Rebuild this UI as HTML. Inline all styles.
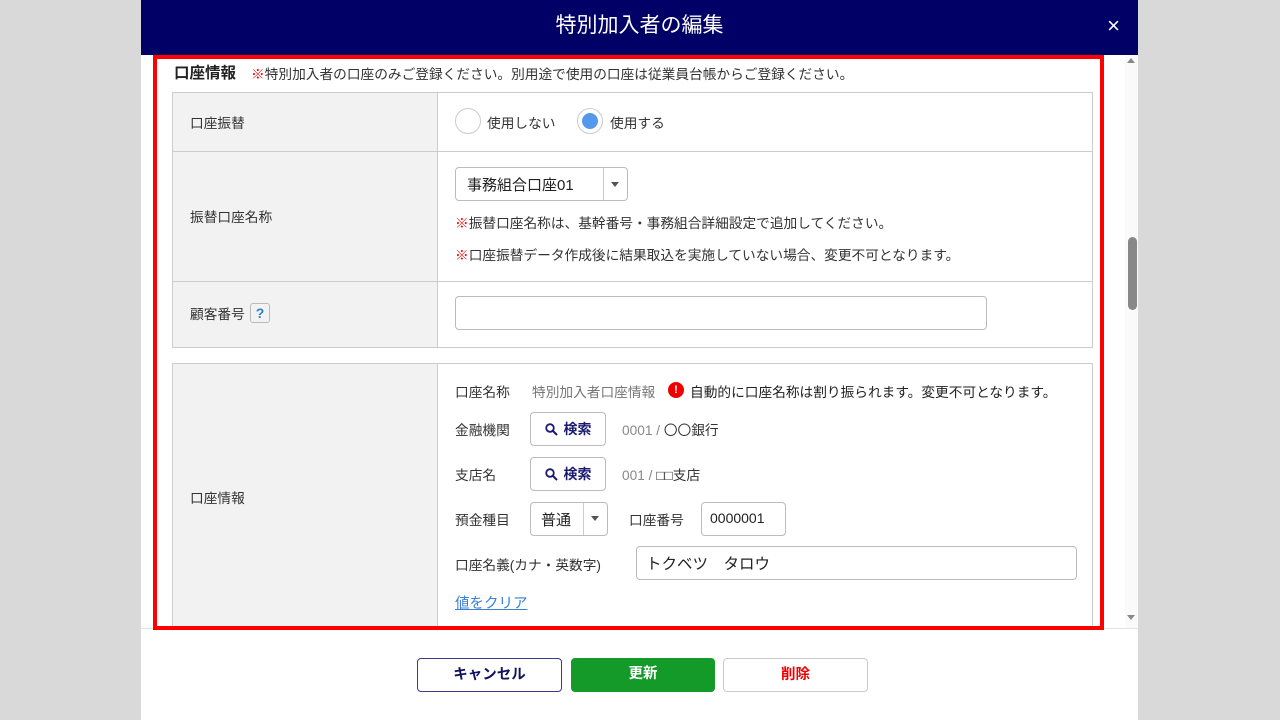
<!DOCTYPE html>
<html><head><meta charset="utf-8"><style>
*{box-sizing:border-box;margin:0;padding:0}
body{width:1280px;height:720px;background:#d9d9d9;position:relative;overflow:hidden;font-family:"Liberation Sans","Noto Sans CJK JP",sans-serif;color:#333;font-size:13.7px}
.a{position:absolute}
.modal{left:141px;top:0;width:997px;height:720px;background:#fff}
.hd{left:141px;top:0;width:997px;height:55px;background:#000066;color:#fff;font-size:21px;text-align:center;line-height:52px}
.lab{background:#f2f2f2;border-right:1px solid #ccc}
.b{border:1px solid #ccc}
.box{border:1px solid #bbb;border-radius:4px;background:#fff}
.red{color:#e00}
.t{white-space:nowrap}
.btn{border-radius:4px;text-align:center;line-height:32px;font-weight:bold;font-size:14.5px}
.srch{border:1px solid #bbb;border-radius:4px;font-weight:bold;line-height:32px;text-align:center;width:76px;height:34px;color:#1a1a70;font-size:14px}
.srch svg{vertical-align:-2px;margin-right:6px}
</style></head><body>
<div class="a modal"></div>
<div class="a hd">特別加入者の編集<span style="position:absolute;right:18px;top:0;font-size:22px">×</span></div>
<div class="a" style="left:1125px;top:55px;width:13px;height:573px;background:#fafafa"></div>
<div class="a" style="left:1127px;top:58px;border:4px solid transparent;border-bottom:5px solid #888;border-top:0"></div>
<div class="a" style="left:1127px;top:615px;border:4px solid transparent;border-top:5px solid #888;border-bottom:0"></div>
<div class="a" style="left:1128px;top:237px;width:9px;height:73px;background:#888;border-radius:5px"></div>
<div class="a" style="left:141px;top:628px;width:997px;height:1px;background:#e4e4e4"></div>

<div class="a t" style="left:174px;top:61px;font-size:15.5px;font-weight:bold;color:#222">口座情報</div>
<div class="a t" style="left:251px;top:63px"><span class="red">※</span>特別加入者の口座のみご登録ください。別用途で使用の口座は従業員台帳からご登録ください。</div>

<div class="a b" style="left:172px;top:92px;width:921px;height:256px"></div>
<div class="a lab" style="left:173px;top:93px;width:265px;height:254px"></div>
<div class="a" style="left:173px;top:151px;width:919px;height:1px;background:#ccc"></div>
<div class="a" style="left:173px;top:281px;width:919px;height:1px;background:#ccc"></div>
<div class="a t" style="left:190px;top:112px">口座振替</div>
<div class="a t" style="left:190px;top:206px">振替口座名称</div>
<div class="a t" style="left:190px;top:303px">顧客番号</div>
<div class="a" style="left:250px;top:303px;width:20px;height:20px;border:1px solid #bbb;border-radius:3px;color:#2a7fd4;font-weight:bold;text-align:center;line-height:18px;font-size:14px">?</div>

<div class="a" style="left:455px;top:108px;width:26px;height:26px;border:1px solid #ccc;border-radius:50%"></div>
<div class="a t" style="left:487px;top:112px">使用しない</div>
<div class="a" style="left:577px;top:108px;width:26px;height:26px;border:1px solid #ccc;border-radius:50%"></div>
<div class="a" style="left:582px;top:113px;width:16px;height:16px;background:#5599ee;border-radius:50%"></div>
<div class="a t" style="left:610px;top:112px">使用する</div>

<div class="a box" style="left:455px;top:167px;width:173px;height:34px"></div>
<div class="a" style="left:603px;top:168px;width:1px;height:32px;background:#ccc"></div>
<div class="a t" style="left:467px;top:174px;font-size:15px;color:#222">事務組合口座01</div>
<div class="a" style="left:611px;top:182px;border:4px solid transparent;border-top:5px solid #555;border-bottom:0"></div>
<div class="a t" style="left:455px;top:212px"><span class="red">※</span>振替口座名称は、基幹番号・事務組合詳細設定で追加してください。</div>
<div class="a t" style="left:455px;top:244px"><span class="red">※</span>口座振替データ作成後に結果取込を実施していない場合、変更不可となります。</div>
<div class="a box" style="left:455px;top:296px;width:532px;height:34px"></div>

<div class="a b" style="left:172px;top:363px;width:921px;height:270px"></div>
<div class="a lab" style="left:173px;top:364px;width:265px;height:268px"></div>
<div class="a t" style="left:190px;top:487px">口座情報</div>
<div class="a t" style="left:455px;top:381px">口座名称</div>
<div class="a t" style="left:532px;top:381px;color:#777">特別加入者口座情報</div>
<div class="a" style="left:668px;top:382px;width:16px;height:16px;border-radius:50%;background:#e00;color:#fff;font-weight:bold;font-size:11px;text-align:center;line-height:16px">!</div>
<div class="a t" style="left:690px;top:381px;color:#222">自動的に口座名称は割り振られます。変更不可となります。</div>
<div class="a t" style="left:455px;top:419px">金融機関</div>
<div class="a srch" style="left:530px;top:412px"><svg width="13" height="13" viewBox="0 0 13 13"><circle cx="5" cy="5" r="3.8" fill="none" stroke="#1a1a70" stroke-width="1.8"/><path d="M8 8l4 4" stroke="#1a1a70" stroke-width="2"/></svg>検索</div>
<div class="a t" style="left:622px;top:419px"><span style="color:#888">0001 / </span>〇〇銀行</div>
<div class="a t" style="left:455px;top:464px">支店名</div>
<div class="a srch" style="left:530px;top:457px"><svg width="13" height="13" viewBox="0 0 13 13"><circle cx="5" cy="5" r="3.8" fill="none" stroke="#1a1a70" stroke-width="1.8"/><path d="M8 8l4 4" stroke="#1a1a70" stroke-width="2"/></svg>検索</div>
<div class="a t" style="left:622px;top:464px"><span style="color:#888">001 / </span>□□支店</div>
<div class="a t" style="left:455px;top:509px">預金種目</div>
<div class="a box" style="left:530px;top:502px;width:78px;height:34px"></div>
<div class="a" style="left:583px;top:503px;width:1px;height:32px;background:#ccc"></div>
<div class="a t" style="left:541px;top:509px;font-size:15px;color:#222">普通</div>
<div class="a" style="left:591px;top:516px;border:4px solid transparent;border-top:5px solid #555;border-bottom:0"></div>
<div class="a t" style="left:629px;top:509px">口座番号</div>
<div class="a box" style="left:701px;top:502px;width:85px;height:34px"></div>
<div class="a t" style="left:710px;top:510px;font-size:14px;color:#222">0000001</div>
<div class="a t" style="left:455px;top:554px">口座名義(カナ・英数字)</div>
<div class="a box" style="left:636px;top:546px;width:441px;height:34px"></div>
<div class="a t" style="left:646px;top:552px;font-size:15.5px;color:#222">トクベツ　タロウ</div>
<div class="a t" style="left:455px;top:592px;color:#3a7fd4;text-decoration:underline;font-size:14.5px">値をクリア</div>

<div class="a" style="left:141px;top:629px;width:997px;height:91px;background:#fff"></div>
<div class="a" style="left:153px;top:55px;width:951px;height:575px;border:4px solid #f00"></div>

<div class="a btn" style="left:417px;top:658px;width:145px;height:34px;border:1px solid #3a3a8a;color:#111160">キャンセル</div>
<div class="a btn" style="left:571px;top:658px;width:144px;height:34px;background:#139a28;color:#fff">更新</div>
<div class="a btn" style="left:723px;top:658px;width:145px;height:34px;border:1px solid #ccc;color:#e00">削除</div>
</body></html>
